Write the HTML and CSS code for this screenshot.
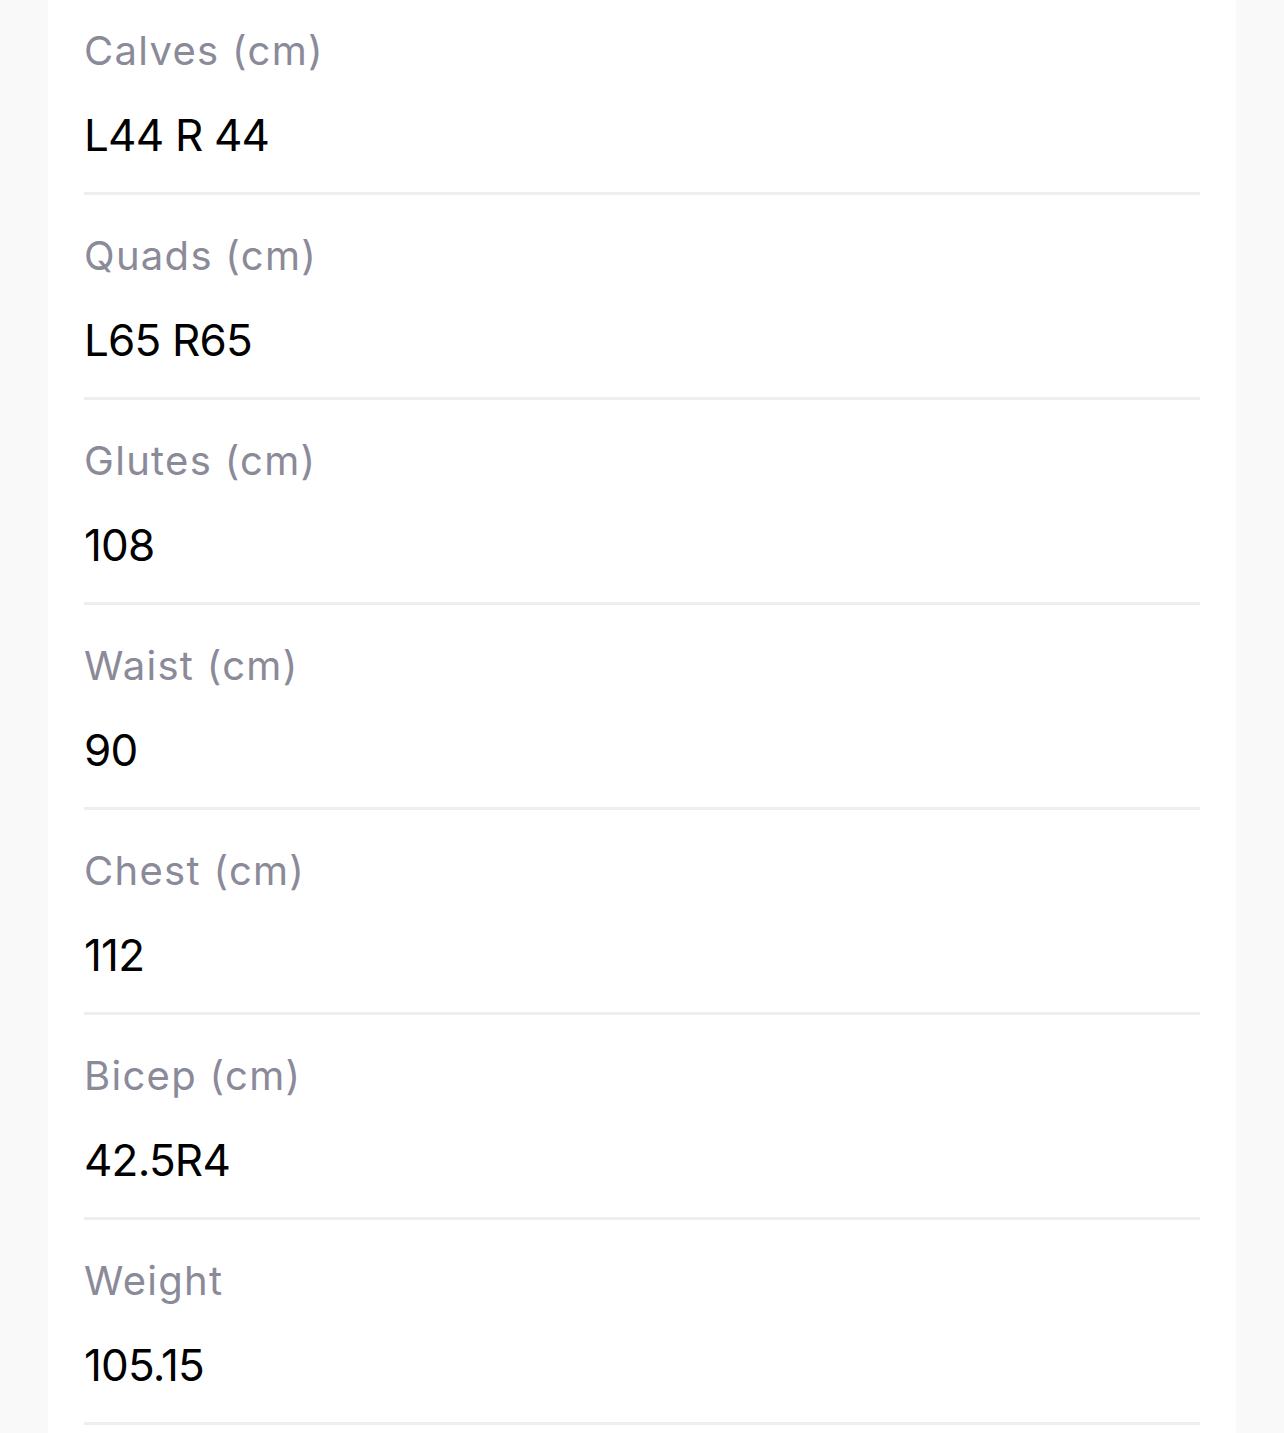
FILE: index.html
```html
<!DOCTYPE html>
<html lang="en">
<head>
    <meta charset="UTF-8">
    <meta name="viewport" content="width=device-width, initial-scale=1.0">
    <title>Measurements</title>
    <link rel="stylesheet" href="styles.css">
</head>
<body>
    <div class="card">
        <div class="field">
            <div class="field-label">Calves (cm)</div>
            <div class="field-value">L44 R 44</div>
        </div>
        <div class="field">
            <div class="field-label">Quads (cm)</div>
            <div class="field-value">L65 R65</div>
        </div>
        <div class="field">
            <div class="field-label">Glutes (cm)</div>
            <div class="field-value">108</div>
        </div>
        <div class="field">
            <div class="field-label">Waist (cm)</div>
            <div class="field-value">90</div>
        </div>
        <div class="field">
            <div class="field-label">Chest (cm)</div>
            <div class="field-value">112</div>
        </div>
        <div class="field">
            <div class="field-label">Bicep (cm)</div>
            <div class="field-value">42.5R4</div>
        </div>
        <div class="field">
            <div class="field-label">Weight</div>
            <div class="field-value">105.15</div>
        </div>
    </div>
</body>
</html>
```

FILE: styles.css
```css
body {
    margin: 0;
    background-color: #f9f9f9;
    font-family: 'Inter', 'Noto Sans', sans-serif;
}

.card {
    margin: -10px 48px 0;
    padding: 0 36px 20px;
    background-color: #ffffff;
}

.field {
    height: 202px;
    border-bottom: 3px solid #eeeeee;
    display: flex;
    flex-direction: column;
}

.field-label {
    margin-top: 31px;
    font-size: 40px;
    line-height: 60px;
    letter-spacing: 1.3px;
    color: #8a8a99;
}

.field-value {
    margin-top: 21px;
    font-size: 44px;
    line-height: 66px;
    letter-spacing: -0.8px;
    color: #000000;
}
```
